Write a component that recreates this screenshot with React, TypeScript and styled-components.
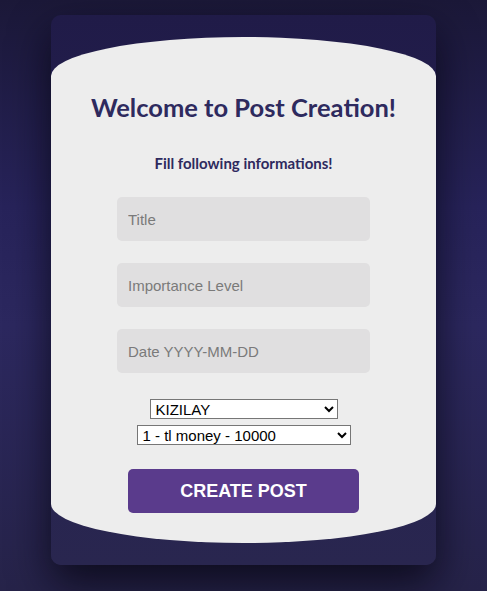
import styled, { createGlobalStyle } from "styled-components";

const GlobalStyle = createGlobalStyle`
  html, body {
    margin: 0;
    padding: 0;
  }
  body {
    min-height: 591px;
    background: linear-gradient(180deg, #1b1838 0%, #27235a 35%, #2c285f 55%, #262349 100%);
    font-family: "Liberation Sans", Arial, sans-serif;
  }
`;

const Page = styled.main`
  display: flex;
  justify-content: center;
  padding-top: 15px;
  min-height: 591px;
  box-sizing: border-box;
`;

const Card = styled.section`
  width: 385px;
  height: 550px;
  box-sizing: border-box;
  padding: 22px 0;
  border-radius: 10px;
  background: linear-gradient(180deg, #201b48 0%, #252152 50%, #29264f 100%);
  box-shadow: 0 18px 40px rgba(5, 4, 15, 0.75);
`;

const Form = styled.form`
  height: 100%;
  box-sizing: border-box;
  display: flex;
  flex-direction: column;
  align-items: center;
  padding-top: 53px;
  background: #ededed;
  border-radius: 50% / 39px;
`;

const Title = styled.h1`
  margin: 0;
  font-family: "Lato", "Noto Sans", sans-serif;
  font-size: 25.5px;
  line-height: 34px;
  font-weight: 700;
  color: #2e2a5e;
`;

const Subtitle = styled.h2`
  margin: 30px 0 25px;
  font-family: "Lato", "Noto Sans", sans-serif;
  font-size: 15px;
  line-height: 18px;
  font-weight: 700;
  color: #2e2a5e;
`;

const Input = styled.input`
  width: 253px;
  height: 44px;
  box-sizing: border-box;
  margin-bottom: 22px;
  padding: 0 11px;
  border: none;
  border-radius: 5px;
  background: #e0dfe0;
  font-family: "Liberation Sans", Arial, sans-serif;
  font-size: 15px;
  color: #333;
  outline: none;

  &::placeholder {
    color: #7a7a7a;
  }
`;

const Select = styled.select<{ $w: number; $top: number }>`
  width: ${(p) => p.$w}px;
  height: 20px;
  margin-top: ${(p) => p.$top}px;
  font-family: "Liberation Sans", Arial, sans-serif;
  font-size: 15px;
  color: #000;
  background: #fff;
  border: 1px solid #767676;
  border-radius: 0;
  padding: 0 1px;
`;

const Button = styled.button`
  width: 231px;
  height: 44px;
  margin-top: 24px;
  border: none;
  border-radius: 5px;
  background: #5a3b8c;
  color: #fff;
  font-family: "Liberation Sans", Arial, sans-serif;
  font-size: 18px;
  font-weight: 700;
  cursor: pointer;
`;

const App = () => {
  return (
    <>
      <GlobalStyle />
      <Page>
        <Card>
          <Form onSubmit={(e) => e.preventDefault()}>
            <Title>Welcome to Post Creation!</Title>
            <Subtitle>Fill following informations!</Subtitle>
            <Input placeholder="Title" />
            <Input placeholder="Importance Level" />
            <Input placeholder="Date YYYY-MM-DD" />
            <Select $w={188} $top={4}>
              <option>KIZILAY</option>
            </Select>
            <Select $w={214} $top={6}>
              <option>1 - tl money - 10000</option>
            </Select>
            <Button type="submit">CREATE POST</Button>
          </Form>
        </Card>
      </Page>
    </>
  );
};

export default App;
